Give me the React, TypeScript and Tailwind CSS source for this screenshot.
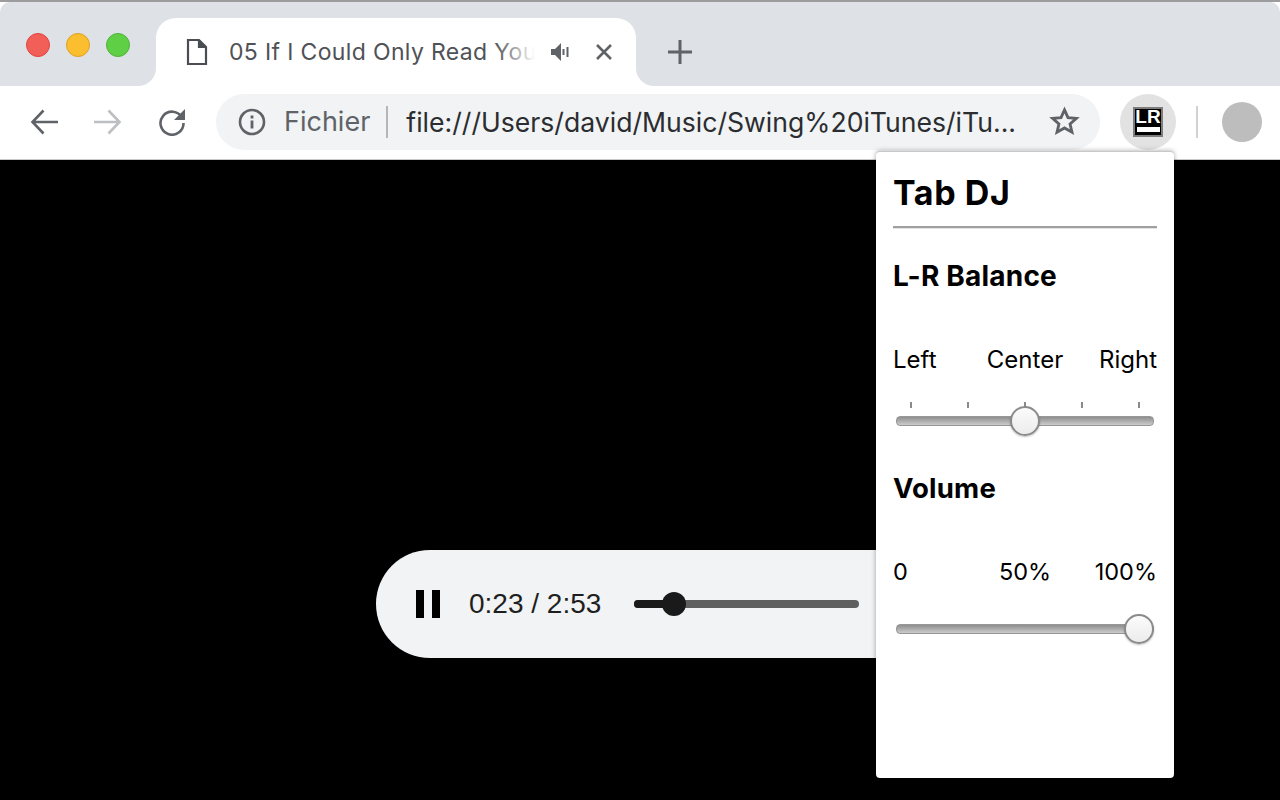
import React from "react";

// Grey bevelled range slider from the popup
const Slider = ({ thumbLeft }: { thumbLeft: string }) => (
  <div className="relative h-[10px] mx-[3px] rounded-[4px] border border-[#979797] bg-gradient-to-b from-[#8e8e8e] to-[#cccccc]">
    <div
      className={`absolute top-[-11px] w-[30px] h-[30px] -ml-[15px] rounded-full border-2 border-[#8a8a8a] bg-gradient-to-b from-[#fbfbfb] to-[#ececec] shadow-[0_1px_2px_rgba(0,0,0,0.25)] ${thumbLeft}`}
    />
  </div>
);

const TrafficLights = () => (
  <div className="flex gap-[16px] w-[156px] pl-[26px] pt-[31px] shrink-0 bg-[#dee1e6] rounded-tl-[10px] rounded-br-[18px]">
    <div className="w-[24px] h-[24px] rounded-full bg-[#f25f58] border border-[#e0443e]" />
    <div className="w-[24px] h-[24px] rounded-full bg-[#fbbe2e] border border-[#dfa123]" />
    <div className="w-[24px] h-[24px] rounded-full bg-[#5fcf45] border border-[#4fb33a]" />
  </div>
);

const App = () => {
  return (
    <div className="relative flex flex-col w-[1280px] h-[800px] overflow-hidden bg-black font-['Inter','Liberation_Sans',sans-serif]">
      {/* Tab strip */}
      <div className="h-[86px] shrink-0 flex bg-white border-t-2 border-[#9c9c9c]">
        <TrafficLights />
        <div className="flex flex-col w-[480px] shrink-0 bg-[#dee1e6]">
          <div className="flex items-center h-[68px] mt-[16px] pl-[30px] rounded-t-[20px] bg-white">
            <svg width="22" height="28" viewBox="0 0 22 28" fill="none" stroke="#4a4d51" strokeWidth="2.2" className="shrink-0">
              <path d="M2 2h11l7 7v17H2z" />
              <path d="M13 2v7h7" fill="#4a4d51" stroke="none" />
              <path d="M13 2v7h7" />
            </svg>
            <div className="relative ml-[21px] w-[306px] overflow-hidden whitespace-nowrap text-[23px] tracking-[0.35px] text-[#4f5256] leading-[32px]">
              05 If I Could Only Read You
              <div className="absolute right-0 top-0 w-[40px] h-full bg-gradient-to-r from-transparent to-white" />
            </div>
            <svg width="18" height="18" viewBox="0 0 18 18" fill="#5f6368" className="ml-[16px] shrink-0">
              <path d="M0 6h4l6-6v18l-6-6H0z" />
              <rect x="11.5" y="6" width="2" height="6" />
              <rect x="15.5" y="4" width="2" height="10" />
            </svg>
            <svg width="16" height="16" viewBox="0 0 16 16" stroke="#5f6368" strokeWidth="2.6" className="ml-[27px] shrink-0">
              <path d="M1 1l14 14M15 1L1 15" />
            </svg>
          </div>
        </div>
        <div className="flex-1 pl-[32px] pt-[38px] bg-[#dee1e6] rounded-tr-[10px] rounded-bl-[18px]">
          <svg width="24" height="24" viewBox="0 0 24 24" stroke="#5f6368" strokeWidth="3">
            <path d="M12 0v24M0 12h24" />
          </svg>
        </div>
      </div>

      {/* Toolbar */}
      <div className="h-[74px] shrink-0 flex items-center pb-[2px] bg-white border-b border-[#c9c9c9]">
        <svg width="28" height="26" viewBox="0 0 28 26" fill="none" stroke="#5f6368" strokeWidth="2.6" className="ml-[30px] shrink-0">
          <path d="M28 13H3M13.5 1.5L2.5 13l11 11.5" />
        </svg>
        <svg width="28" height="26" viewBox="0 0 28 26" fill="none" stroke="#bdbfc2" strokeWidth="2.6" className="ml-[36px] shrink-0">
          <path d="M0 13h25M14.5 1.5L25.5 13l-11 11.5" />
        </svg>
        <svg width="28" height="28" viewBox="0 0 28 28" fill="none" className="ml-[36px] shrink-0">
          <path d="M24 9.5A11.5 11.5 0 1 0 25.5 15" stroke="#5f6368" strokeWidth="2.6" />
          <path d="M27 1v11H16z" fill="#5f6368" />
        </svg>

        {/* Omnibox */}
        <div className="flex items-center w-[884px] h-[56px] ml-[30px] pl-[22px] rounded-full bg-[#f1f3f4]">
          <svg width="28" height="28" viewBox="0 0 28 28" fill="none" className="shrink-0">
            <circle cx="14" cy="14" r="12" stroke="#5f6368" strokeWidth="2.6" />
            <rect x="12.6" y="12.5" width="2.8" height="8" fill="#5f6368" />
            <rect x="12.6" y="7.5" width="2.8" height="3" fill="#5f6368" />
          </svg>
          <span className="ml-[18px] mt-[1px] text-[27px] leading-[34px] text-[#5f6368]">Fichier</span>
          <div className="w-[2px] h-[32px] ml-[16px] bg-[#b4b6b9]" />
          <span className="ml-[18px] w-[612px] whitespace-nowrap text-[26.6px] leading-[34px] text-[#2b2d30]">file:///Users/david/Music/Swing%20iTunes/iTu...</span>
          <svg width="31" height="31" viewBox="0 0 24 24" fill="none" stroke="#5f6368" strokeWidth="2.2" className="ml-[31px] shrink-0">
            <path d="M12 3l2.7 6 6.5.6-4.9 4.3 1.5 6.4L12 17l-5.8 3.3 1.5-6.4-4.9-4.3 6.5-.6z" />
          </svg>
        </div>

        {/* Extension button */}
        <div className="flex items-center justify-center w-[56px] h-[56px] ml-[20px] rounded-full bg-[#e2e2e2] shrink-0">
          <div className="flex flex-col items-center w-[30px] h-[30px] border-2 border-[#7d7d7d] bg-black overflow-hidden">
            <span className="!font-['Liberation_Sans',sans-serif] font-bold text-[19px] leading-[16px] text-white">LR</span>
            <div className="w-[23px] h-[5px] mt-[2px] bg-white" />
          </div>
        </div>
        <div className="w-[2px] h-[32px] ml-[20px] bg-[#d2d2d2] shrink-0" />
        <div className="w-[40px] h-[40px] ml-[24px] rounded-full bg-[#bdbdbd] shrink-0" />
      </div>

      {/* Video area with the media controls */}
      <div className="flex-1 pl-[376px] pt-[390px]">
        <div className="flex items-center w-[560px] h-[108px] pl-[40px] rounded-l-[54px] bg-[#f1f3f4]">
          <div className="flex gap-[8px] shrink-0">
            <div className="w-[8px] h-[28px] bg-black" />
            <div className="w-[8px] h-[28px] bg-black" />
          </div>
          <span className="ml-[29px] w-[165px] shrink-0 whitespace-nowrap text-[28px] leading-[32px] text-[#1f1f1f] !font-['Liberation_Sans',sans-serif]">0:23 / 2:53</span>
          <div className="relative w-[225px] h-[8px] rounded-full bg-[#5f5f5f]">
            <div className="w-[40px] h-full rounded-l-full bg-[#1a1a1a]" />
            <div className="absolute left-[28px] top-[-8px] w-[24px] h-[24px] rounded-full bg-[#1a1a1a]" />
          </div>
        </div>
      </div>

      {/* Extension popup */}
      <div className="absolute left-[876px] top-[151px] w-[298px] h-[627px] px-[17px] pt-[21px] rounded-[4px] border-t border-[#c8c8c8] bg-white text-black shadow-[0_0_5px_rgba(0,0,0,0.35)]">
        <h1 className="text-[34px] leading-[40px] tracking-[0.6px] font-bold">Tab DJ</h1>
        <div className="h-[3px] mt-[13px] bg-[#a0a0a0] border-b border-[#e4e4e4]" />
        <h2 className="mt-[31px] text-[28px] leading-[32px] tracking-[0.2px] font-bold">L-R Balance</h2>
        <div className="grid grid-cols-3 mt-[53px] text-[24px] leading-[30px]">
          <span className="text-left">Left</span>
          <span className="text-center">Center</span>
          <span className="text-right">Right</span>
        </div>
        <div className="flex justify-between mt-[27px] pl-[17px] pr-[17px]">
          <div className="w-[2px] h-[6px] bg-[#8a8a8a]" />
          <div className="w-[2px] h-[6px] bg-[#8a8a8a]" />
          <div className="w-[2px] h-[6px] bg-[#8a8a8a]" />
          <div className="w-[2px] h-[6px] bg-[#8a8a8a]" />
          <div className="w-[2px] h-[6px] bg-[#8a8a8a]" />
        </div>
        <div className="mt-[8px]">
          <Slider thumbLeft="left-1/2" />
        </div>
        <h2 className="mt-[46px] text-[27.5px] leading-[32px] tracking-[0.2px] font-bold">Volume</h2>
        <div className="grid grid-cols-3 mt-[53px] text-[23.5px] leading-[30px]">
          <span className="text-left">0</span>
          <span className="text-center">50%</span>
          <span className="text-right">100%</span>
        </div>
        <div className="mt-[37px]">
          <Slider thumbLeft="left-[242px]" />
        </div>
      </div>
    </div>
  );
};

export default App;
